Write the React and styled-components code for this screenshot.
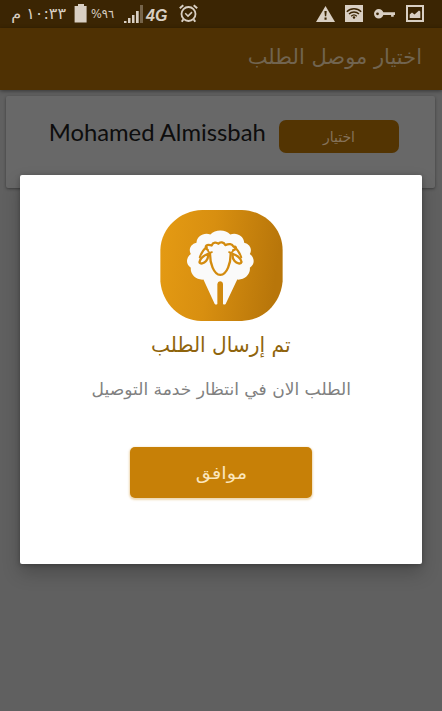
import React from "react";
import styled, { createGlobalStyle } from "styled-components";

const GlobalStyle = createGlobalStyle`
  * { box-sizing: border-box; }
  html, body { margin: 0; padding: 0; }
  body { background: #606060; overflow: hidden; }
`;

const arabic = `"DejaVu Sans", "Noto Sans", sans-serif`;

const Screen = styled.div`
  position: relative;
  width: 442px;
  height: 711px;
  overflow: hidden;
  background: #606060;
  font-family: ${arabic};
`;

const StatusBar = styled.header`
  display: flex;
  justify-content: space-between;
  height: 28px;
  padding: 4px 18px 0 10px;
  background: #3b2503;
  color: #d9cfc3;
`;

const StatusGroup = styled.div`
  display: flex;
  align-items: flex-start;
  gap: ${(p) => p.$gap || 0}px;
`;

const Clock = styled.span`
  width: 56px;
  height: 20px;
  margin-right: 8px;
  font-size: 16px;
  line-height: 19px;
  white-space: nowrap;
`;

const Percent = styled.span`
  width: 36px;
  padding-left: 3px;
  font-size: 12px;
  line-height: 20px;
  white-space: nowrap;
`;

const Network = styled.span`
  width: 35px;
  padding-left: 2px;
  font: italic 700 16px/24px "Liberation Sans", sans-serif;
`;

const Line = styled.span`
  display: inline-block;
  white-space: nowrap;
  transform: scaleX(${(p) => p.$sx || 1});
  transform-origin: ${(p) => p.$origin || "center"};
`;

const AppBar = styled.div`
  height: 62px;
  padding: 0 20px;
  background: #4f3103;
  box-shadow: 0 1px 4px rgba(0, 0, 0, 0.45);
  color: #716450;
  font-size: 21px;
  line-height: 59px;
`;

const DriverCard = styled.section`
  display: flex;
  justify-content: flex-end;
  gap: 13px;
  height: 92px;
  margin: 6px 7px 0 6px;
  padding: 24px 36px 0 0;
  border-radius: 2px;
  background: #686868;
  box-shadow: 0 1px 3px rgba(0, 0, 0, 0.4);
`;

const DriverName = styled.div`
  color: #0d0d0d;
  font: 400 23px/24px Lato, sans-serif;
`;

const ChooseButton = styled.button`
  width: 120px;
  height: 33px;
  padding: 0;
  border: 0;
  border-radius: 7px;
  background: #533402;
  color: #85725a;
  font: 400 14px/30px ${arabic};
`;

const Dialog = styled.section`
  position: absolute;
  top: 175px;
  left: 20px;
  display: flex;
  flex-direction: column;
  align-items: center;
  width: 402px;
  height: 389px;
  padding-top: 35px;
  border-radius: 2px;
  background: #fff;
  box-shadow: 0 9px 18px rgba(0, 0, 0, 0.22), 0 1px 5px rgba(0, 0, 0, 0.25);
`;

const Title = styled.h1`
  margin: 8px 0 0;
  color: #8f640c;
  font: 400 21px/32px ${arabic};
`;

const Message = styled.p`
  margin: 14px 0 0;
  color: #808080;
  font: 400 16.5px/30px ${arabic};
`;

const OkButton = styled.button`
  width: 182px;
  height: 51px;
  margin-top: 42px;
  padding: 0;
  border: 0;
  border-radius: 5px;
  background: #c78007;
  box-shadow: 0 1px 2px 1px rgba(199, 128, 7, 0.3);
  color: #fbe6bd;
  font: 400 17px/48px ${arabic};
`;

const Icon = styled.svg`
  display: block;
  flex: none;
  margin-top: ${(p) => p.$top || 0}px;
  margin-left: ${(p) => p.$left || 0}px;
`;

const BatteryIcon = () => (
  <Icon width="14" height="19" viewBox="0 0 14 19" fill="#d9cfc3">
    <path d="M4 0h6v2h2.6v16.6H.6V2H4z" />
  </Icon>
);

const SignalIcon = () => (
  <Icon width="20" height="18" viewBox="0 0 20 18" fill="#d9cfc3" $top={1}>
    <path d="M0 16h2.5v2H0zM4 13h2.5v5H4zM8 10h2.5v8H8zM12 6h2.7v12H12z" />
    <path d="M16 0h3v18h-3z" fill="#76644a" />
  </Icon>
);

const AlarmIcon = () => (
  <Icon width="19" height="19" viewBox="0 0 19 19" fill="none" stroke="#d9cfc3">
    <circle cx="9.5" cy="10" r="7" strokeWidth="1.8" />
    <path d="M6.2 9.3l2.8 2.8 4-4" strokeWidth="1.5" />
    <path d="M.8 4.2L4.3 1.2M14.7 1.2l3.5 3M4.2 15.5l-1.4 2.2M14.8 15.5l1.4 2.2" strokeWidth="2" />
  </Icon>
);

const WarningIcon = () => (
  <Icon width="19" height="16" viewBox="0 0 19 16" $top={1.5}>
    <path d="M9.5 0L19 16H0z" fill="#d9cfc3" />
    <path d="M8.4 5h2.3l-.5 5.2H8.9zM8.5 11.5h2.1v2.2H8.5z" fill="#3b2503" />
  </Icon>
);

const WifiIcon = () => (
  <Icon width="18" height="17" viewBox="0 0 18 17" $top={1}>
    <path d="M0 0h18v17H0z" fill="#d9cfc3" />
    <g fill="none" stroke="#3b2503" strokeWidth="1.4">
      <path d="M1.8 6.7C5.8 2.7 12.2 2.7 16.2 6.7M4 9.1c2.8-2.8 7.2-2.8 10 0M6.2 11.2c1.6-1.5 4-1.5 5.6 0" />
    </g>
    <circle cx="9" cy="12.5" r="1.2" fill="#3b2503" />
  </Icon>
);

const KeyIcon = () => (
  <Icon width="22" height="10" viewBox="0 0 22 10" $top={5}>
    <path
      fillRule="evenodd"
      fill="#d9cfc3"
      d="M4.8 0C7 0 8.6 1.3 9.3 3.3H21v2.8h-1.3v1.7h-2.6V6.1H9.3C8.6 8.3 7 9.6 4.8 9.6a4.8 4.8 0 010-9.6zM3.5 3.4a1.4 1.4 0 100 2.8 1.4 1.4 0 000-2.8z"
    />
  </Icon>
);

const GalleryIcon = () => (
  <Icon width="18" height="17" viewBox="0 0 18 17" $top={1}>
    <path d="M1 1h16v15H1z" fill="none" stroke="#d9cfc3" strokeWidth="2" />
    <path d="M3.7 13V9.5L6 7.6l2.5 2 4.5-4 1.3 1V13z" fill="#d9cfc3" />
  </Icon>
);

const SheepLogo = () => (
  <Icon width="123" height="111" viewBox="44 30 369 335">
    <defs>
      <linearGradient id="amber" x1="0" x2="1" y1="0" y2="0.12">
        <stop offset="0" stopColor="#e59b13" />
        <stop offset="0.45" stopColor="#d88f10" />
        <stop offset="1" stopColor="#b8760a" />
      </linearGradient>
    </defs>
    <path
      d="M170 30H290C358 32 412 84 413 150V245C407 313 355 363 290 365H167C102 363 50 313 44 245V150C46 84 102 32 170 30Z"
      fill="url(#amber)"
    />
    <path
      fill="#fafafa"
      d="M195 104C209 88 241 88 255 104C275 97 296 109 297 129C315 133 322 150 314 163C330 175 329 195 314 204C317 224 298 242 276 240L241 314Q237 317 233 314V253Q232 245 224 245Q217 245 216 253V314Q212 317 208 314L174 240C152 242 133 224 136 204C121 195 120 175 136 163C128 150 135 133 153 129C154 109 175 97 195 104Z"
    />
    <g fill="none" stroke="#d38b0e" strokeWidth="7" strokeLinecap="round" strokeLinejoin="round">
      <path d="M194 160C193 190 205 225 225 226C245 225 257 190 256 160" />
      <path d="M186 150C175 139 184 132 199 137C203 126 214 127 219 132C224 125 236 127 240 136C251 131 261 132 264 140C274 140 275 148 265 151" />
      <path d="M188 151C187 158 194 160 200 157M263 151C264 158 257 160 251 157" strokeWidth="5" />
      <path d="M188 162C174 167 163 178 162 187C163 195 176 191 182 184C187 178 189 170 188 162Z" />
      <path d="M262 162C276 167 287 178 289 187C287 195 274 191 268 184C263 178 261 170 262 162Z" />
      <path d="M184 142C174 149 167 160 163 173M267 142C277 149 284 160 288 173" strokeWidth="6" />
    </g>
  </Icon>
);

export default function App() {
  return (
    <>
      <GlobalStyle />
      <Screen>
        <StatusBar>
          <StatusGroup>
            <Clock dir="rtl"><Line $origin="right">١٠:٣٣ م</Line></Clock>
            <BatteryIcon />
            <Percent><Line $sx={0.95} $origin="left">%٩٦</Line></Percent>
            <SignalIcon />
            <Network>4G</Network>
            <AlarmIcon />
          </StatusGroup>
          <StatusGroup $gap={10.5}>
            <WarningIcon />
            <WifiIcon />
            <KeyIcon />
            <GalleryIcon />
          </StatusGroup>
        </StatusBar>
        <AppBar dir="rtl"><Line $origin="right">اختيار موصل الطلب</Line></AppBar>
        <DriverCard>
          <DriverName><Line $origin="right" $sx={1.035}>Mohamed Almissbah</Line></DriverName>
          <ChooseButton><Line>اختيار</Line></ChooseButton>
        </DriverCard>
        <Dialog role="dialog" dir="rtl">
          <SheepLogo />
          <Title><Line $sx={0.96}>تم إرسال الطلب</Line></Title>
          <Message><Line $sx={1.035}>الطلب الان في انتظار خدمة التوصيل</Line></Message>
          <OkButton><Line $sx={1.14}>موافق</Line></OkButton>
        </Dialog>
      </Screen>
    </>
  );
}
